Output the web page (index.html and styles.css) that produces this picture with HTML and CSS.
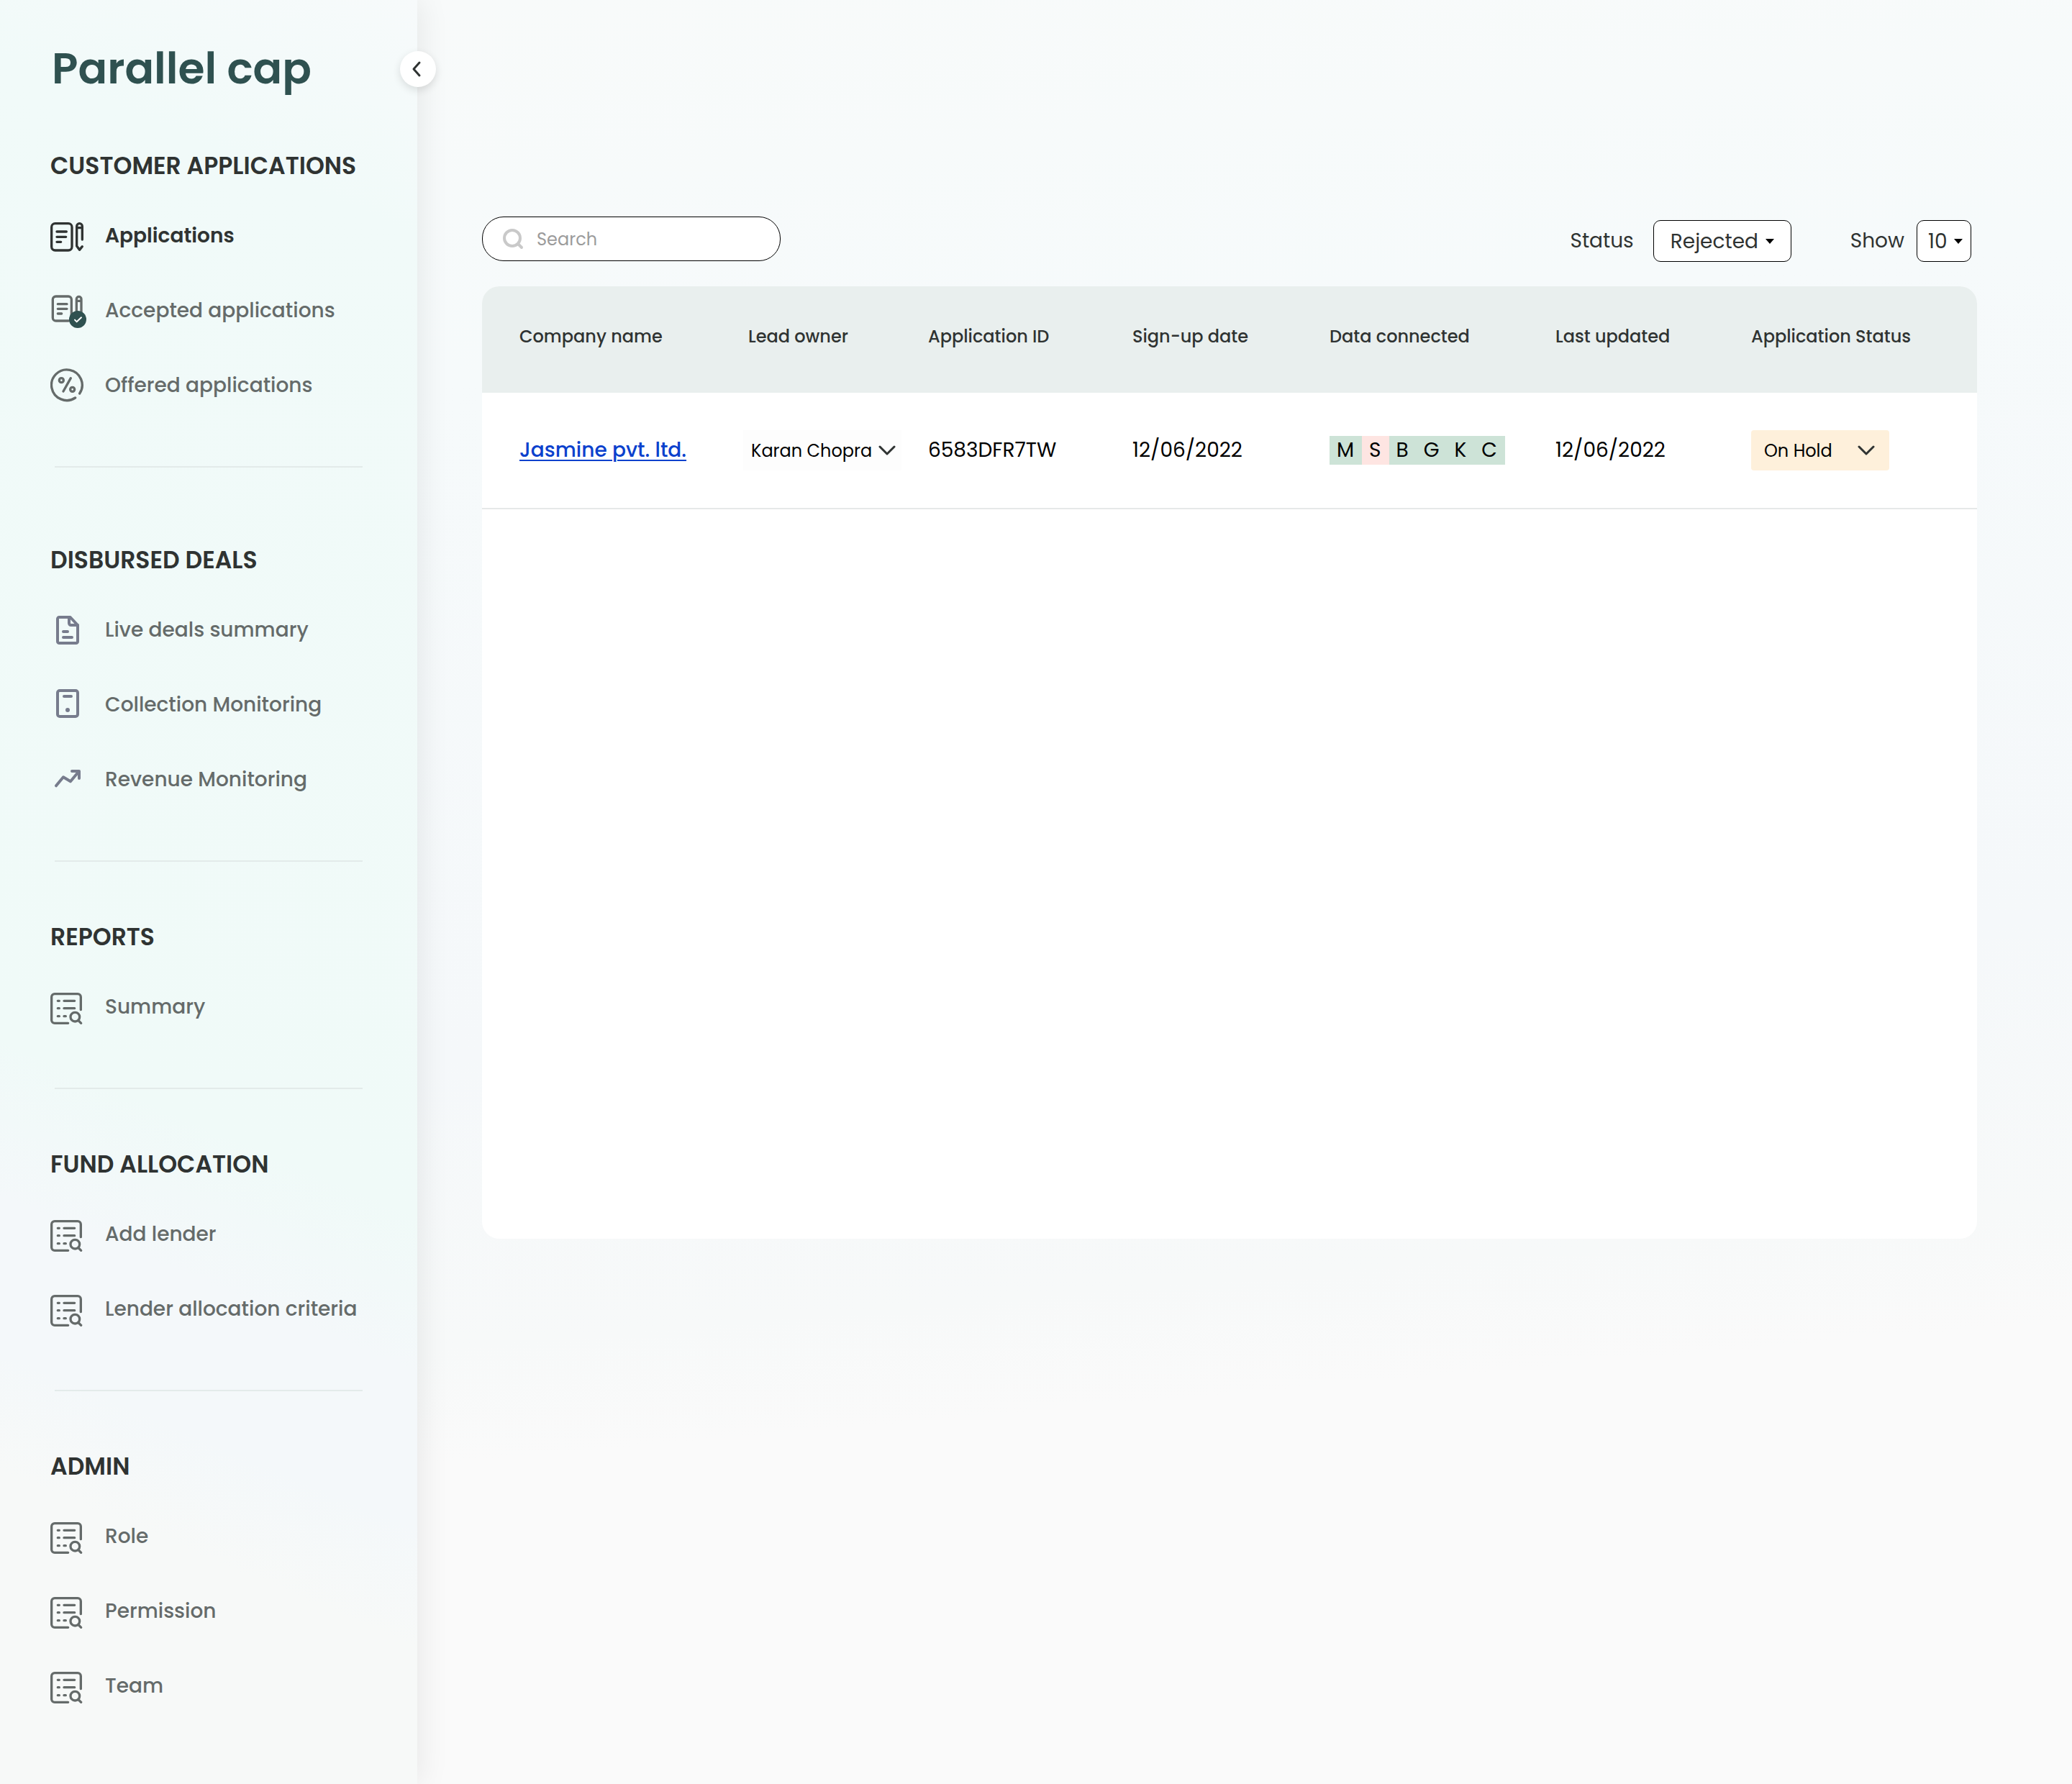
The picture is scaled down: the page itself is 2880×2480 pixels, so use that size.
FILE: index.html
```html
<!DOCTYPE html>
<html lang="en">
<head>
    <meta charset="UTF-8">
    <meta name="viewport" content="width=device-width, initial-scale=1.0">
    <title>Parallel cap</title>
    <link rel="stylesheet" href="styles.css">
</head>
<body>
    <!-- Shared icon shapes -->
    <svg class="sprite" aria-hidden="true">
        <symbol id="icon-report" viewBox="0 0 150 150">
            <path d="M127 86V33a13 13 0 0 0-13-13H18A13 13 0 0 0 5 33v96a13 13 0 0 0 13 13h56"/>
            <path d="M31 49h6M57 49h44M31 80h6M57 80h44M31 113h6M57 113h7"/>
            <circle cx="103" cy="116" r="19"/>
            <path d="M118 132l10 10"/>
        </symbol>
        <symbol id="icon-chevron" viewBox="0 0 24 16">
            <path d="M2 3l10 10L22 3"/>
        </symbol>
        <symbol id="icon-caret" viewBox="0 0 12 8">
            <path d="M0 1h12L6 8z"/>
        </symbol>
    </svg>

    <div class="layout">
        <aside class="sidebar">
            <h1 class="logo">Parallel cap</h1>
            <button class="collapse" type="button" aria-label="Collapse menu">
                <svg viewBox="0 0 14 24"><path d="M11 3L3 12l8 9"/></svg>
            </button>

            <nav class="menu">
                <section class="group group-first">
                    <h2>CUSTOMER APPLICATIONS</h2>
                    <a class="item active" href="#">
                        <svg class="icon" viewBox="0 0 150 150">
                            <rect x="5" y="23" width="85" height="112" rx="15"/>
                            <path d="M27 57h40M27 79h38M27 100h17"/>
                            <path d="M133 90V35a11.5 12 0 0 0-23 0v82l11.5 16 11.5-14M110 41h23"/>
                        </svg>
                        <span>Applications</span>
                    </a>
                    <a class="item" href="#">
                        <svg class="icon" viewBox="0 0 150 150">
                            <rect x="10" y="15" width="78" height="102" rx="13"/>
                            <path d="M31 47h38M31 67h38M31 87h16"/>
                            <path d="M109 90V26a10 10 0 0 1 20 0v64M109 34h20"/>
                            <circle class="badge" cx="114" cy="111" r="36"/>
                            <path class="tick" d="M102 113l8 8 19-18"/>
                        </svg>
                        <span>Accepted applications</span>
                    </a>
                    <a class="item" href="#">
                        <svg class="icon" viewBox="0 0 150 150">
                            <path d="M104 126A64 64 0 1 1 122 108"/>
                            <circle cx="46" cy="53" r="9"/>
                            <circle cx="92" cy="91" r="9"/>
                            <path d="M85 44L54 99"/>
                        </svg>
                        <span>Offered applications</span>
                    </a>
                </section>

                <section class="group">
                    <h2>DISBURSED DEALS</h2>
                    <a class="item" href="#">
                        <svg class="icon icon-blue" viewBox="0 0 150 150">
                            <path d="M37 21h46l31 33v68a7 7 0 0 1-7 7H37a7 7 0 0 1-7-7V28a7 7 0 0 1 7-7z"/>
                            <path d="M78 21v25a8 8 0 0 0 8 8h28M54 81h18M54 105h36"/>
                        </svg>
                        <span>Live deals summary</span>
                    </a>
                    <a class="item" href="#">
                        <svg class="icon icon-blue" viewBox="0 0 150 150">
                            <rect x="30" y="15" width="84" height="108" rx="9"/>
                            <path d="M57 39h30"/>
                            <circle class="dot" cx="72" cy="96" r="9"/>
                        </svg>
                        <span>Collection Monitoring</span>
                    </a>
                    <a class="item" href="#">
                        <svg class="icon icon-blue" viewBox="0 0 150 150">
                            <path d="M24 100l30-36 30 18 35-42M90 39h30v30"/>
                        </svg>
                        <span>Revenue Monitoring</span>
                    </a>
                </section>

                <section class="group">
                    <h2>REPORTS</h2>
                    <a class="item" href="#"><svg class="icon"><use href="#icon-report"/></svg><span>Summary</span></a>
                </section>

                <section class="group">
                    <h2>FUND ALLOCATION</h2>
                    <a class="item" href="#"><svg class="icon"><use href="#icon-report"/></svg><span>Add lender</span></a>
                    <a class="item" href="#"><svg class="icon"><use href="#icon-report"/></svg><span>Lender allocation criteria</span></a>
                </section>

                <section class="group">
                    <h2>ADMIN</h2>
                    <a class="item" href="#"><svg class="icon"><use href="#icon-report"/></svg><span>Role</span></a>
                    <a class="item" href="#"><svg class="icon"><use href="#icon-report"/></svg><span>Permission</span></a>
                    <a class="item" href="#"><svg class="icon"><use href="#icon-report"/></svg><span>Team</span></a>
                </section>
            </nav>
        </aside>

        <main class="content">
            <div class="toolbar">
                <label class="search">
                    <svg viewBox="0 0 30 30"><circle cx="14" cy="14" r="11"/><path d="M22 22l5 5"/></svg>
                    <input type="text" placeholder="Search" aria-label="Search">
                </label>
                <div class="filters">
                    <label for="status">Status</label>
                    <span class="select select-status">
                        <select id="status">
                            <option>Rejected</option>
                            <option>Accepted</option>
                        </select>
                        <svg class="caret"><use href="#icon-caret"/></svg>
                    </span>
                    <label class="show-label" for="show">Show</label>
                    <span class="select select-show">
                        <select id="show">
                            <option>10</option>
                            <option>20</option>
                        </select>
                        <svg class="caret"><use href="#icon-caret"/></svg>
                    </span>
                </div>
            </div>

            <div class="card">
                <table>
                    <colgroup>
                        <col class="col-company">
                        <col class="col-owner">
                        <col class="col-id">
                        <col class="col-signup">
                        <col class="col-data">
                        <col class="col-updated">
                        <col class="col-status">
                    </colgroup>
                    <thead>
                        <tr>
                            <th>Company name</th>
                            <th>Lead owner</th>
                            <th>Application ID</th>
                            <th>Sign-up date</th>
                            <th>Data connected</th>
                            <th>Last updated</th>
                            <th>Application Status</th>
                        </tr>
                    </thead>
                    <tbody>
                        <tr>
                            <td><a class="company" href="#">Jasmine pvt. ltd.</a></td>
                            <td class="owner-cell">
                                <span class="select select-owner">
                                    <select aria-label="Lead owner">
                                        <option>Karan Chopra</option>
                                    </select>
                                    <svg class="chevron"><use href="#icon-chevron"/></svg>
                                </span>
                            </td>
                            <td>6583DFR7TW</td>
                            <td>12/06/2022</td>
                            <td>
                                <div class="sources">
                                    <span>M</span><span class="off">S</span><span>B</span><span>G</span><span>K</span><span>C</span>
                                </div>
                            </td>
                            <td>12/06/2022</td>
                            <td>
                                <span class="select select-hold">
                                    <select aria-label="Application status">
                                        <option>On Hold</option>
                                    </select>
                                    <svg class="chevron"><use href="#icon-chevron"/></svg>
                                </span>
                            </td>
                        </tr>
                    </tbody>
                </table>
            </div>
        </main>
    </div>
</body>
</html>
```

FILE: styles.css
```css
* {
    box-sizing: border-box;
}
body {
    margin: 0;
    font-family: Poppins, Inter, sans-serif;
    font-size: 28px;
    color: #2f3332;
}
svg {
    display: block;
    fill: none;
    stroke-linecap: round;
    stroke-linejoin: round;
}
.sprite {
    position: absolute;
    width: 0;
    height: 0;
}
.layout {
    display: flex;
    min-height: 100vh;
}

/* Sidebar */
.sidebar {
    position: relative;
    flex: none;
    width: 580px;
    padding: 48px 70px 84px;
    background: linear-gradient(203deg, #f7fafb 0%, #f1faf9 12%, #f0faf8 62%, #f4f8fa 70%, #f4f8fa 78%, #f7f9f8 84%, #f7f9f8 100%);
    box-shadow: 4px 0 40px rgba(0, 0, 0, 0.08);
}
.logo {
    margin: 0 0 0 2px;
    font-size: 60px;
    line-height: 94px;
    font-weight: 600;
    color: #2f5150;
    white-space: nowrap;
}
.collapse {
    position: absolute;
    top: 71px;
    right: -26px;
    display: flex;
    align-items: center;
    justify-content: center;
    width: 50px;
    height: 50px;
    padding: 0 4px 0 0;
    border: none;
    border-radius: 50%;
    background-color: #fff;
    box-shadow: 0 4px 12px rgba(0, 0, 0, 0.12);
    cursor: pointer;
}
.collapse svg {
    width: 14px;
    height: 24px;
    stroke: #2f3332;
    stroke-width: 3;
}
.menu {
    padding-top: 65px;
}
.group h2 {
    margin: 0 0 21px;
    font-size: 33px;
    line-height: 48px;
    font-weight: 600;
    white-space: nowrap;
}
.group + .group::before {
    content: "";
    display: block;
    height: 2px;
    margin: 60px 6px 81px;
    background-color: #e3ebea;
}
.group-first + .group::before {
    margin-bottom: 105px;
}
.item {
    display: flex;
    align-items: center;
    gap: 26px;
    height: 104px;
    color: #656b6a;
    font-weight: 500;
    text-decoration: none;
    white-space: nowrap;
}
.item.active {
    color: #2f3332;
    font-weight: 600;
}
.icon {
    flex: none;
    width: 50px;
    height: 50px;
    stroke: currentColor;
    stroke-width: 10;
}
.icon-blue {
    stroke: #777c8d;
    stroke-width: 12;
}
.icon .badge {
    fill: #2f5150;
    stroke: none;
}
.icon .tick {
    stroke: #fff;
    stroke-width: 6;
}
.icon .dot {
    fill: #777c8d;
    stroke: none;
}

/* Content */
.content {
    flex: 1;
    min-width: 0;
    padding: 301px 132px 0 90px;
    background: linear-gradient(175deg, #f8fafa 0%, #f6fafb 20%, #f5f8fa 55%, #f7f9f9 70%, #fafafa 76%, #fafafa 100%);
}
.toolbar {
    display: flex;
    align-items: flex-start;
    justify-content: space-between;
    margin-bottom: 34px;
}
.search {
    display: flex;
    align-items: center;
    gap: 18px;
    width: 415px;
    height: 62px;
    padding: 0 27px;
    border: 1px solid #000;
    border-radius: 30px;
    background-color: #fff;
}
.search svg {
    flex: none;
    width: 30px;
    height: 30px;
    stroke: #c9c9c9;
    stroke-width: 4;
}
.search input {
    width: 100%;
    padding: 0;
    border: none;
    outline: none;
    background: none;
    font: inherit;
    font-size: 24px;
}
.search input::placeholder {
    color: #9b9b9b;
}
.filters {
    display: flex;
    align-items: center;
    padding: 5px 8px 0 0;
}
.filters label {
    margin-right: 27px;
}
.filters .show-label {
    margin: 0 17px 0 82px;
}
.select {
    position: relative;
    display: block;
}
.select select {
    display: block;
    width: 100%;
    height: 100%;
    border: none;
    border-radius: inherit;
    background: none;
    appearance: none;
    font: inherit;
    color: inherit;
}
.select svg {
    position: absolute;
    top: 50%;
    transform: translateY(-50%);
    pointer-events: none;
}
.select-status,
.select-show {
    height: 58px;
    border: 1px solid #000;
    border-radius: 10px;
    background-color: #fff;
}
.select-status {
    width: 192px;
}
.select-status select {
    padding: 0 0 0 23px;
}
.select-show {
    width: 76px;
}
.select-show select {
    padding: 0 0 0 15px;
}
.caret {
    right: 23px;
    width: 12px;
    height: 8px;
    fill: #000;
}
.select-show .caret {
    right: 11px;
}
.chevron {
    width: 24px;
    height: 16px;
    stroke: #2f3332;
    stroke-width: 3;
}

/* Table */
.card {
    min-height: 1324px;
    border-radius: 24px;
    background-color: #fff;
    overflow: hidden;
}
table {
    width: 100%;
    table-layout: fixed;
    border-collapse: collapse;
}
.col-company { width: 363px; }
.col-owner { width: 250px; }
.col-id { width: 284px; }
.col-signup { width: 274px; }
.col-data { width: 314px; }
.col-updated { width: 272px; }
.col-status { width: 321px; }
th,
td {
    padding: 0 0 0 7px;
    text-align: left;
    white-space: nowrap;
}
th:first-child,
td:first-child {
    padding-left: 52px;
}
th {
    height: 148px;
    padding-bottom: 10px;
    background-color: #e9efee;
    font-size: 24px;
    font-weight: 500;
}
td {
    height: 161px;
    border-bottom: 2px solid #e6e8e8;
    color: #000;
}
.company {
    color: #0b41cd;
    font-weight: 500;
    text-decoration-thickness: 2px;
    text-underline-offset: 4px;
}
td.owner-cell {
    padding-left: 0;
}
.select-owner {
    width: 220px;
    height: 56px;
    background-color: #fdfdfd;
    font-size: 24px;
}
.select-owner select {
    padding: 0 0 0 11px;
}
.select-owner .chevron {
    right: 8px;
}
.select-hold {
    width: 192px;
    height: 56px;
    border-radius: 4px;
    background-color: #fef0db;
    font-size: 24px;
}
.select-hold select {
    padding: 0 0 0 18px;
}
.select-hold .chevron {
    right: 20px;
}
.sources {
    display: flex;
    width: fit-content;
    background-color: #cde3d7;
}
.sources span {
    padding: 0 11px 0 10px;
    line-height: 40px;
}
.sources .off {
    background-color: #fee5e2;
}
```
